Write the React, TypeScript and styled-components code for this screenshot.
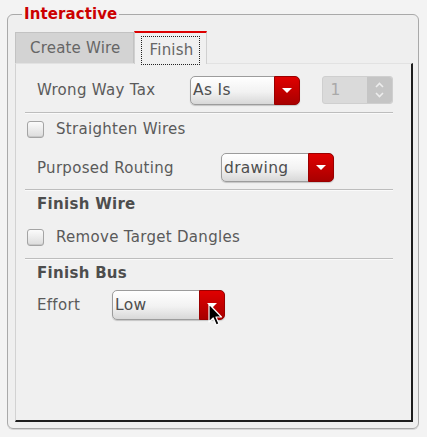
import React from "react";
import styled, { createGlobalStyle } from "styled-components";

const Global = createGlobalStyle`
  html, body { margin: 0; padding: 0; background: #f3f3f3; }
  body { font-family: "DejaVu Sans", "Liberation Sans", sans-serif; }
`;

const Page = styled.div`
  width: 427px;
  height: 437px;
  overflow: hidden;
`;

const Group = styled.fieldset`
  box-sizing: border-box;
  margin: 5px 0 0 7px;
  width: 412px;
  min-width: 0;
  padding: 8px 5px 6px 7px;
  border: 1px solid #a9a9a9;
  border-radius: 6px;
  background: #efefef;
  box-shadow: 0 1px 0 #d6d6d6;
`;

const Legend = styled.legend`
  margin-left: 7px;
  padding: 0 2px;
  font-size: 15px;
  line-height: 18px;
  font-weight: bold;
  color: #cc0000;
  letter-spacing: 0.1px;
`;

const TabBar = styled.div`
  display: flex;
  align-items: flex-end;
  height: 32px;
`;

const Tab = styled.div<{ $active?: boolean }>`
  box-sizing: border-box;
  position: relative;
  z-index: ${(p) => (p.$active ? 2 : 1)};
  display: flex;
  align-items: center;
  justify-content: center;
  height: ${(p) => (p.$active ? "33px" : "31px")};
  margin-bottom: ${(p) => (p.$active ? "-1px" : "0")};
  padding: ${(p) => (p.$active ? "0 6px" : "0 12px 0 14px")};
  background: ${(p) => (p.$active ? "#f0f0f0" : "#d3d3d3")};
  border: 1px solid ${(p) => (p.$active ? "#d0d0d0" : "#c2c2c2")};
  border-bottom: none;
  border-top: ${(p) => (p.$active ? "2px solid #dd0000" : "1px solid #c2c2c2")};
  font-size: 15px;
  letter-spacing: 0.2px;
  color: #666;
`;

const Focus = styled.span`
  display: inline-flex;
  align-items: center;
  height: 27px;
  margin-top: 3px;
  padding: 0 6px 0 8px;
  border: 1px dotted #222;
`;

const Pane = styled.div`
  box-sizing: border-box;
  width: 398px;
  height: 359px;
  display: flex;
  flex-direction: column;
  padding: 0 18px 0 9px;
  background: #f0f0f0;
  border-left: 1px solid #d2d2d2;
  border-top: 1px solid #e2e2e2;
  border-right: 2px solid #1e1e1e;
  border-bottom: 2px solid #1e1e1e;
  color: #5a5a5a;
  font-size: 15px;
  letter-spacing: 0.3px;
`;

const Row = styled.div<{ $h: number; $mt: number }>`
  display: flex;
  align-items: center;
  height: ${(p) => p.$h}px;
  margin-top: ${(p) => p.$mt}px;
`;

const Label = styled.span<{ $w?: number }>`
  margin-left: 12px;
  width: ${(p) => (p.$w ? `${p.$w}px` : "auto")};
  flex-shrink: 0;
`;

const Heading = styled.span`
  margin-left: 12px;
  font-weight: bold;
  color: #4d4d4d;
`;

const Separator = styled.div<{ $mt: number }>`
  height: 1px;
  margin-top: ${(p) => p.$mt}px;
  background: #bdbdbd;
  box-shadow: 0 1px 0 #fafafa;
`;

const Check = styled.span`
  box-sizing: border-box;
  width: 17px;
  height: 17px;
  margin: 0 12px 0 2px;
  border: 1px solid #a4a4a4;
  border-radius: 3px;
  background: linear-gradient(#fbfbfb, #dcdcdc);
  box-shadow: inset 0 -1px 0 #c8c8c8;
`;

const Combo = styled.div<{ $w: number; $h: number }>`
  box-sizing: border-box;
  position: relative;
  display: flex;
  width: ${(p) => p.$w}px;
  height: ${(p) => p.$h}px;
  border: 1px solid #9c9c9c;
  border-radius: 5px;
  background: linear-gradient(#ffffff, #f2f2f2 55%, #d8d8d8);
  box-shadow: 0 1px 1px rgba(0, 0, 0, 0.18);
  color: #4e4e4e;
`;

const ComboText = styled.span`
  flex: 1;
  display: flex;
  align-items: center;
  padding-left: 2px;
  font-size: 15.5px;
`;

const ComboButton = styled.span`
  width: 24px;
  display: flex;
  align-items: center;
  justify-content: center;
  margin: -1px -1px -1px 0;
  border-radius: 0 5px 5px 0;
  background: linear-gradient(#e00000, #c40000 50%, #a80000);
  border: 1px solid #9a0000;
`;

const Triangle = styled.span`
  width: 0;
  height: 0;
  border-left: 5px solid transparent;
  border-right: 5px solid transparent;
  border-top: 5px solid #ffffff;
`;

const Spin = styled.div`
  box-sizing: border-box;
  display: flex;
  width: 71px;
  height: 28px;
  margin-left: 22px;
  border: 1px solid #cfcfcf;
  border-radius: 3px;
  background: #dadada;
  color: #a9a9a9;
`;

const SpinText = styled.span`
  flex: 1;
  display: flex;
  align-items: center;
  padding-left: 7px;
  font-size: 15.5px;
`;

const SpinArrows = styled.span`
  width: 25px;
  display: flex;
  flex-direction: column;
  align-items: center;
  justify-content: center;
  gap: 4px;
  background: #c5c5c5;
  border-radius: 0 3px 3px 0;
`;

const Cursor = styled.svg`
  position: absolute;
  left: 95px;
  top: 12px;
  z-index: 5;
`;

const Chevron = ({ up }: { up?: boolean }) => (
  <svg width="9" height="6" viewBox="0 0 9 6">
    <path
      d={up ? "M1 5 L4.5 1.5 L8 5" : "M1 1 L4.5 4.5 L8 1"}
      fill="none"
      stroke="#ededed"
      strokeWidth="1.6"
    />
  </svg>
);

const Select = ({
  value,
  w,
  h,
  children,
}: {
  value: string;
  w: number;
  h: number;
  children?: React.ReactNode;
}) => (
  <Combo $w={w} $h={h}>
    <ComboText>{value}</ComboText>
    <ComboButton>
      <Triangle />
    </ComboButton>
    {children}
  </Combo>
);

export default function App() {
  return (
    <Page>
      <Global />
      <Group>
        <Legend>Interactive</Legend>
        <TabBar>
          <Tab>Create Wire</Tab>
          <Tab $active>
            <Focus>Finish</Focus>
          </Tab>
        </TabBar>
        <Pane>
          <Row $h={28} $mt={12}>
            <Label $w={153}>Wrong Way Tax</Label>
            <Select value="As Is" w={111} h={29} />
            <Spin>
              <SpinText>1</SpinText>
              <SpinArrows>
                <Chevron up />
                <Chevron />
              </SpinArrows>
            </Spin>
          </Row>
          <Separator $mt={8} />
          <Row $h={20} $mt={6}>
            <Check />
            <span>Straighten Wires</span>
          </Row>
          <Row $h={29} $mt={14}>
            <Label $w={184}>Purposed Routing</Label>
            <Select value="drawing" w={113} h={29} />
          </Row>
          <Separator $mt={7} />
          <Row $h={18} $mt={5}>
            <Heading>Finish Wire</Heading>
          </Row>
          <Row $h={20} $mt={14}>
            <Check />
            <span>Remove Target Dangles</span>
          </Row>
          <Separator $mt={11} />
          <Row $h={18} $mt={5}>
            <Heading>Finish Bus</Heading>
          </Row>
          <Row $h={30} $mt={8}>
            <Label $w={75}>Effort</Label>
            <Select value="Low" w={113} h={30}>
              <Cursor width="14" height="24" viewBox="0 0 14 24">
                <path
                  d="M1 1 L1 19 L5.2 15 L8.2 22 L11 20.8 L8 14 L13.5 14 Z"
                  fill="#000"
                  stroke="#fff"
                  strokeWidth="1.2"
                  strokeLinejoin="round"
                />
              </Cursor>
            </Select>
          </Row>
        </Pane>
      </Group>
    </Page>
  );
}
